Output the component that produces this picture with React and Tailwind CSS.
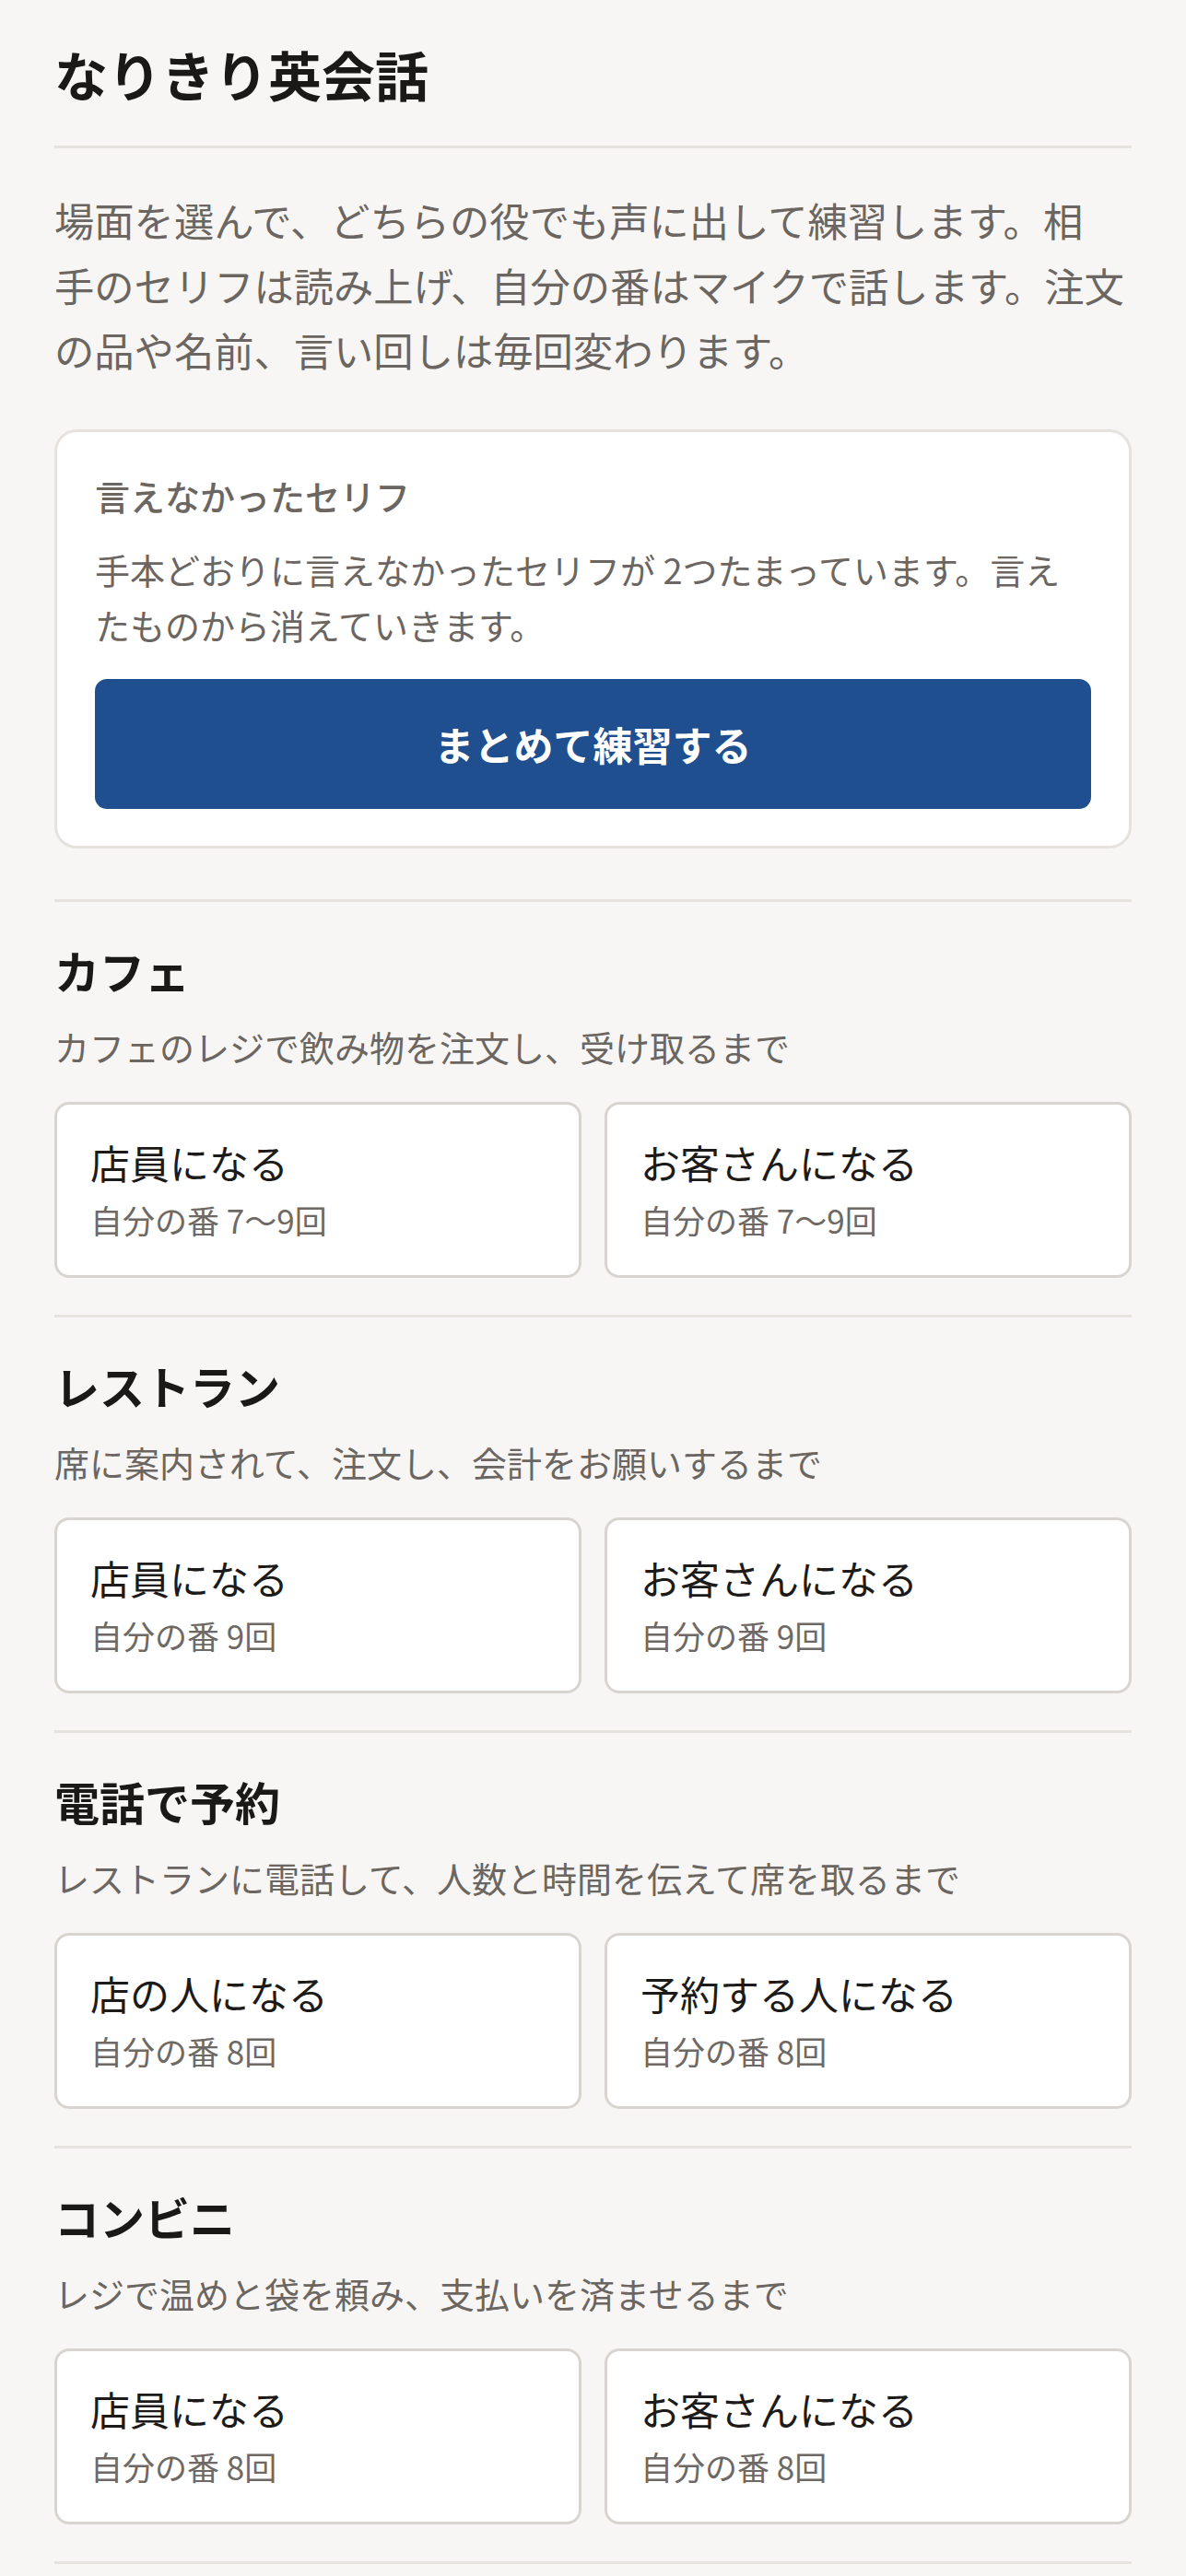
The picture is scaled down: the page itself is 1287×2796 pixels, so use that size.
import React from 'react';

const scenes = [
  {
    title: 'カフェ',
    desc: 'カフェのレジで飲み物を注文し、受け取るまで',
    roles: [
      { label: '店員になる', turns: '自分の番 7〜9回' },
      { label: 'お客さんになる', turns: '自分の番 7〜9回' },
    ],
  },
  {
    title: 'レストラン',
    desc: '席に案内されて、注文し、会計をお願いするまで',
    roles: [
      { label: '店員になる', turns: '自分の番 9回' },
      { label: 'お客さんになる', turns: '自分の番 9回' },
    ],
  },
  {
    title: '電話で予約',
    desc: 'レストランに電話して、人数と時間を伝えて席を取るまで',
    roles: [
      { label: '店の人になる', turns: '自分の番 8回' },
      { label: '予約する人になる', turns: '自分の番 8回' },
    ],
  },
  {
    title: 'コンビニ',
    desc: 'レジで温めと袋を頼み、支払いを済ませるまで',
    roles: [
      { label: '店員になる', turns: '自分の番 8回' },
      { label: 'お客さんになる', turns: '自分の番 8回' },
    ],
  },
];

function RoleCard({ label, turns }) {
  return (
    <button className="text-left bg-white border-[3px] border-[#d8d4cf] rounded-[16px] px-[36px] pt-[32px] pb-[35px]">
      <div className="text-[43px] leading-[60px] text-[#1c1b1a]">{label}</div>
      <div className="mt-[8px] text-[35px] leading-[50px] text-[#6e6964]">{turns}</div>
    </button>
  );
}

export default function App() {
  return (
    <div
      className="min-h-screen bg-[#f7f6f4] px-[59px] pt-[42px]"
      style={{ fontFamily: '"Noto Sans CJK JP", "Noto Sans", sans-serif' }}
    >
      <h1 className="text-[58px] leading-[76px] font-bold text-[#1a1918] pb-[40px] border-b-[3px] border-[#e6e3df]">
        なりきり英会話
      </h1>

      <p className="mt-[42px] text-[43.3px] leading-[70.5px] text-[#6b6661]">
        場面を選んで、どちらの役でも声に出して練習します。相<br />
        手のセリフは読み上げ、自分の番はマイクで話します。注文<br />
        の品や名前、言い回しは毎回変わります。
      </p>

      {/* missed lines */}
      <div className="mt-[51px] bg-white border-[3px] border-[#e6e3de] rounded-[24px] px-[41px] pt-[42px] pb-[40px]">
        <div className="text-[38px] leading-[54px] font-medium text-[#6b6661]">言えなかったセリフ</div>
        <p className="mt-[23px] text-[38px] leading-[60px] text-[#6b6661]">
          手本どおりに言えなかったセリフが 2つたまっています。言えたものから消えていきます。
        </p>
        <button className="mt-[29px] w-full h-[141px] rounded-[13px] bg-[#1f4f8f] text-white text-[43px] font-bold">
          まとめて練習する
        </button>
      </div>

      <div className="mt-[55px]">
        {scenes.map((s) => (
          <section key={s.title} className="border-t-[3px] border-[#e6e3df] pt-[42px] pb-[40px]">
            <h2 className="text-[49px] leading-[64px] font-bold text-[#1a1918]">{s.title}</h2>
            <p className="mt-[22px] text-[38px] leading-[57px] text-[#6b6661]">{s.desc}</p>
            <div className="mt-[32px] grid grid-cols-2 gap-[25px]">
              {s.roles.map((r) => (
                <RoleCard key={r.label} {...r} />
              ))}
            </div>
          </section>
        ))}
        <div className="border-t-[3px] border-[#e6e3df] h-[60px]" />
      </div>
    </div>
  );
}
